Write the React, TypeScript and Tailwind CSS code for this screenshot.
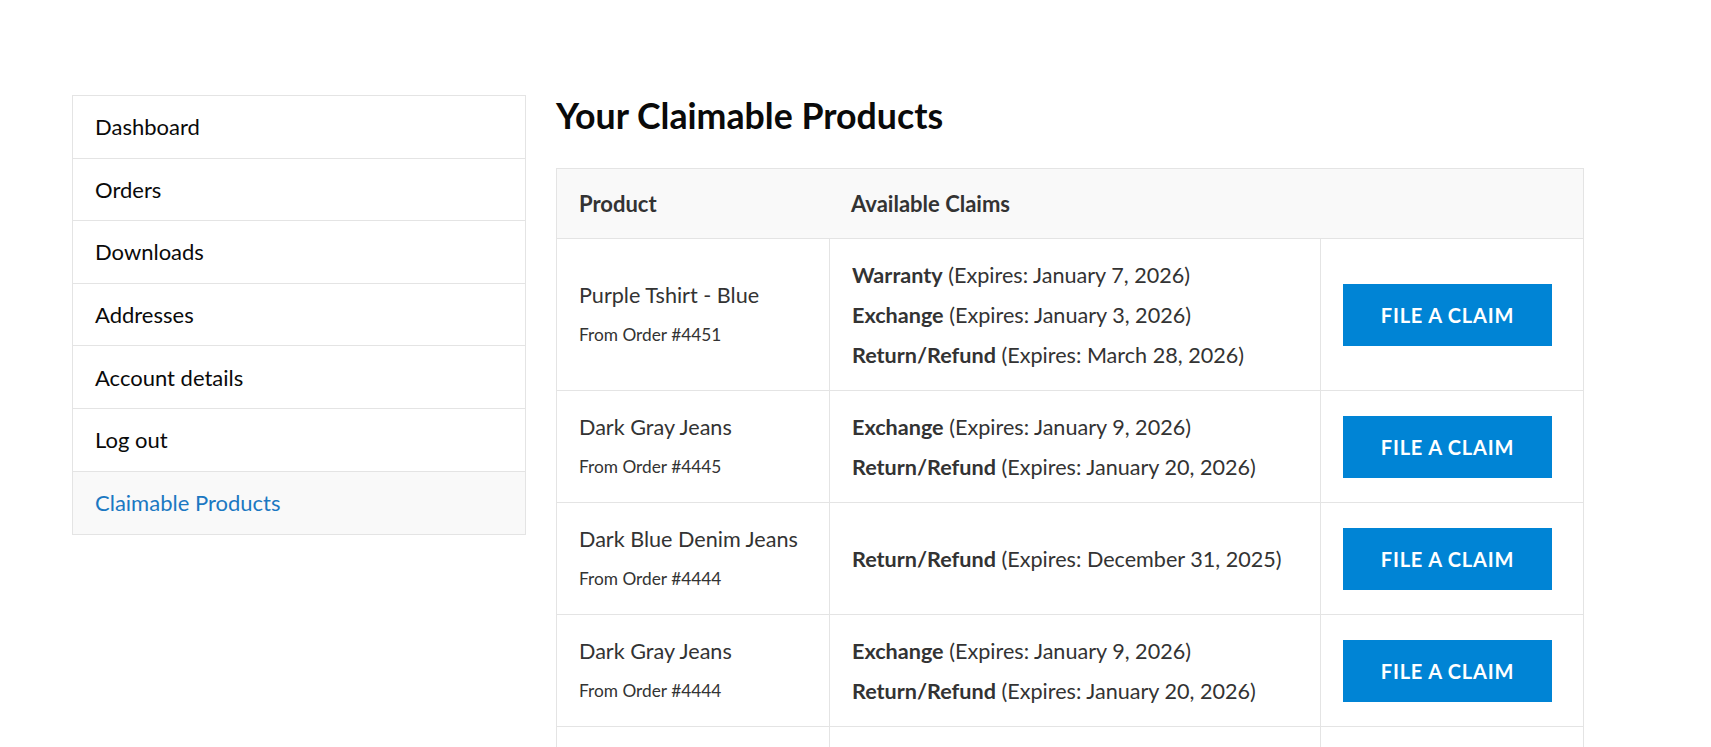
import React from "react";

type Claim = { type: string; expires: string };
type Row = { name: string; order: string; claims: Claim[] };

const rows: Row[] = [
  {
    name: "Purple Tshirt - Blue",
    order: "From Order #4451",
    claims: [
      { type: "Warranty", expires: "January 7, 2026" },
      { type: "Exchange", expires: "January 3, 2026" },
      { type: "Return/Refund", expires: "March 28, 2026" },
    ],
  },
  {
    name: "Dark Gray Jeans",
    order: "From Order #4445",
    claims: [
      { type: "Exchange", expires: "January 9, 2026" },
      { type: "Return/Refund", expires: "January 20, 2026" },
    ],
  },
  {
    name: "Dark Blue Denim Jeans",
    order: "From Order #4444",
    claims: [{ type: "Return/Refund", expires: "December 31, 2025" }],
  },
  {
    name: "Dark Gray Jeans",
    order: "From Order #4444",
    claims: [
      { type: "Exchange", expires: "January 9, 2026" },
      { type: "Return/Refund", expires: "January 20, 2026" },
    ],
  },
  {
    name: "Dark Blue Denim Jeans",
    order: "From Order #4443",
    claims: [{ type: "Warranty", expires: "December 31, 2026" }],
  },
];

const nav = [
  "Dashboard",
  "Orders",
  "Downloads",
  "Addresses",
  "Account details",
  "Log out",
  "Claimable Products",
];

export default function App() {
  return (
    <div
      className="min-h-screen bg-white"
      style={{ fontFamily: "Lato, 'Open Sans', sans-serif" }}
    >
      <div className="flex items-start gap-[30px] pl-[72px] pt-[95px]">
        {/* Sidebar */}
        <nav className="w-[454px] shrink-0 border border-[#e4e4e4]">
          {nav.map((item, i) => {
            const active = item === "Claimable Products";
            return (
              <div
                key={item}
                className={
                  "flex h-[62.6px] items-center px-[22px] text-[22px] " +
                  (i < nav.length - 1 ? "border-b border-[#e4e4e4] " : "") +
                  (active ? "bg-[#f9f9f9] text-[#1b78c2]" : "text-[#0a0a0a]")
                }
              >
                {item}
              </div>
            );
          })}
        </nav>

        {/* Content */}
        <main className="w-[1028px] shrink-0">
          <h1 className="text-[35.7px] font-bold leading-[42px] text-[#0a0a0a]">
            Your Claimable Products
          </h1>
          <div className="mt-[31px] border border-[#e4e4e4] text-[#333333]">
            <div className="grid h-[70px] grid-cols-[272px_491px_1fr] items-center border-b border-[#e4e4e4] bg-[#f9f9f9] text-[22px] font-bold">
              <div className="px-[22px]">Product</div>
              <div className="px-[22px]">Available Claims</div>
              <div />
            </div>
            {rows.map((r, idx) => (
              <div
                key={idx}
                className="grid grid-cols-[272px_491px_1fr] border-b border-[#e4e4e4]"
              >
                <div className="flex flex-col justify-center px-[22px] py-[15.5px] leading-[40px]">
                  <div className="whitespace-nowrap text-[21.6px]">{r.name}</div>
                  <div className="whitespace-nowrap text-[17.3px]">{r.order}</div>
                </div>
                <div className="flex flex-col justify-center border-l border-[#e4e4e4] px-[22px] py-[15.5px] text-[21.6px] leading-[40px]">
                  {r.claims.map((c, j) => (
                    <div key={j} className="whitespace-nowrap">
                      <span className="font-bold">{c.type}</span> (Expires:{" "}
                      {c.expires})
                    </div>
                  ))}
                </div>
                <div className="flex items-center border-l border-[#e4e4e4] px-[22px]">
                  <button className="flex h-[62px] w-[209px] items-center justify-center bg-[#0084d5] text-[20px] font-bold tracking-[0.8px] text-white">
                    FILE A CLAIM
                  </button>
                </div>
              </div>
            ))}
          </div>
        </main>
      </div>
    </div>
  );
}
